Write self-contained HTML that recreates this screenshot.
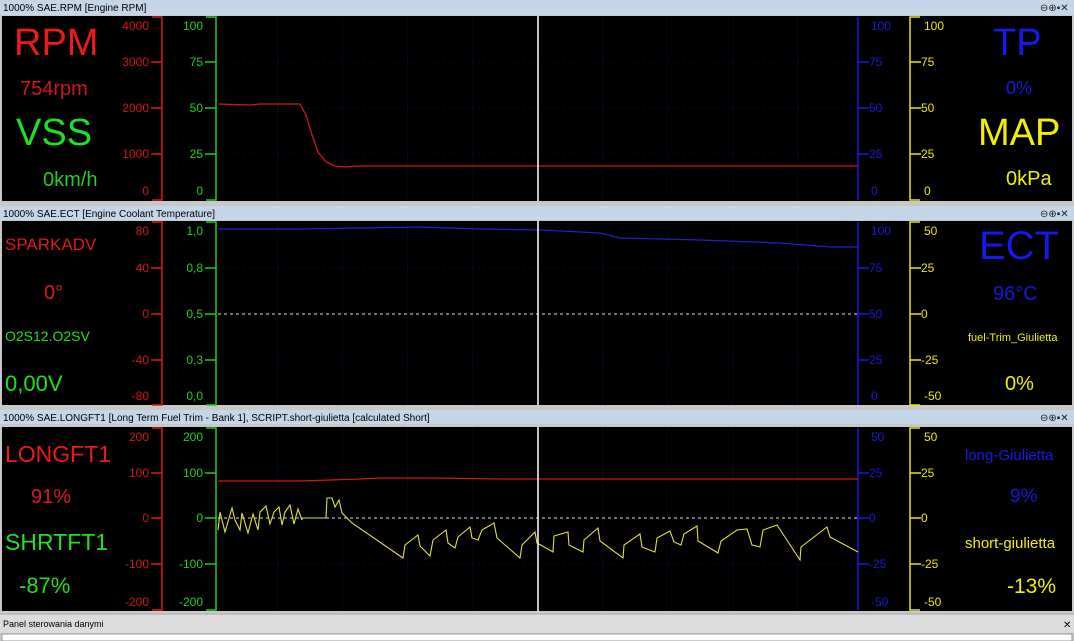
<!DOCTYPE html>
<html><head><meta charset="utf-8"><style>
html,body{margin:0;padding:0;background:#d4d0c8;width:1074px;height:641px;overflow:hidden}
svg{display:block}
text{font-family:"Liberation Sans",Arial,sans-serif}
.t{font-size:10px;fill:#000}
</style></head><body>
<svg width="1074" height="641" viewBox="0 0 1074 641" xmlns="http://www.w3.org/2000/svg">
<defs>
<pattern id="vg" x="0" y="0" width="65" height="10" patternUnits="userSpaceOnUse">
<rect x="17" width="1" height="10" fill="#06061c"/>
</pattern>
</defs>
<rect width="1074" height="641" fill="#c8c8c8"/>
<g>
<rect x="0" y="0" width="1074" height="15" fill="#c5d6e8"/>
<text class="t" x="3" y="11">1000% SAE.RPM [Engine RPM]</text>
<rect x="0" y="206" width="1074" height="14" fill="#c5d6e8"/>
<text class="t" x="3" y="217">1000% SAE.ECT [Engine Coolant Temperature]</text>
<rect x="0" y="410" width="1074" height="14" fill="#c5d6e8"/>
<text class="t" x="3" y="421">1000% SAE.LONGFT1 [Long Term Fuel Trim - Bank 1], SCRIPT.short-giulietta [calculated Short]</text>
<text x="1040" y="11" font-size="10" fill="#222">⊖⊕▪✕</text>
<text x="1040" y="217" font-size="10" fill="#222">⊖⊕▪✕</text>
<text x="1040" y="421" font-size="10" fill="#222">⊖⊕▪✕</text>
</g>
<rect x="2" y="16" width="1070" height="185" fill="#000"/>
<rect x="2" y="221" width="1070" height="184" fill="#000"/>
<rect x="2" y="427" width="1070" height="184" fill="#000"/>
<rect x="218" y="16" width="640" height="185" fill="url(#vg)"/>
<rect x="218" y="221" width="640" height="184" fill="url(#vg)"/>
<rect x="218" y="427" width="640" height="184" fill="url(#vg)"/>
<g stroke="#0a0a30" stroke-dasharray="2,3" stroke-width="1">
<line x1="218" y1="62" x2="858" y2="62"/><line x1="218" y1="108" x2="858" y2="108"/><line x1="218" y1="154" x2="858" y2="154"/>
<line x1="218" y1="268" x2="858" y2="268"/><line x1="218" y1="360" x2="858" y2="360"/>
<line x1="218" y1="472" x2="858" y2="472"/><line x1="218" y1="564" x2="858" y2="564"/>
</g>
<g stroke="#ddd" stroke-dasharray="3,3"><line x1="218" y1="314" x2="858" y2="314"/><line x1="218" y1="518" x2="858" y2="518"/></g>

<g fill="none" stroke-width="1.5">
<path d="M152,17H162V200H152" stroke="#e01818"/>
<path d="M206,17H216V200H206" stroke="#20d020"/>
<path d="M858,17V200" stroke="#1818e0"/>
<path d="M920,17H910V200H920" stroke="#e8e800"/>
<path d="M151,62h11M151,108h11M151,154h11" stroke="#e01818"/>
<path d="M205,62h11M205,108h11M205,154h11" stroke="#20d020"/>
<path d="M858,62h11M858,108h11M858,154h11" stroke="#1818e0"/>
<path d="M910,62h11M910,108h11M910,154h11" stroke="#e8e800"/>
</g>
<g fill="none" stroke-width="1.5">
<path d="M152,222H162V405H152" stroke="#e01818"/>
<path d="M206,222H216V405H206" stroke="#20d020"/>
<path d="M858,222V405" stroke="#1818e0"/>
<path d="M920,222H910V405H920" stroke="#e8e800"/>
<path d="M151,268h11M151,314h11M151,360h11" stroke="#e01818"/>
<path d="M205,268h11M205,314h11M205,360h11" stroke="#20d020"/>
<path d="M858,268h11M858,314h11M858,360h11" stroke="#1818e0"/>
<path d="M910,268h11M910,314h11M910,360h11" stroke="#e8e800"/>
</g>
<g fill="none" stroke-width="1.5">
<path d="M152,428H162V610H152" stroke="#e01818"/>
<path d="M206,428H216V610H206" stroke="#20d020"/>
<path d="M858,428V610" stroke="#1818e0"/>
<path d="M920,428H910V610H920" stroke="#e8e800"/>
<path d="M151,473h11M151,518h11M151,564h11" stroke="#e01818"/>
<path d="M205,473h11M205,518h11M205,564h11" stroke="#20d020"/>
<path d="M858,473h11M858,518h11M858,564h11" stroke="#1818e0"/>
<path d="M910,473h11M910,518h11M910,564h11" stroke="#e8e800"/>
</g>

<g font-size="12" text-anchor="end" fill="#d01818">
<text x="149" y="30">4000</text><text x="149" y="66">3000</text><text x="149" y="112">2000</text><text x="149" y="158">1000</text><text x="149" y="195">0</text>
<text x="149" y="235">80</text><text x="149" y="272">40</text><text x="149" y="318">0</text><text x="149" y="364">-40</text><text x="149" y="400">-80</text>
<text x="149" y="441">200</text><text x="149" y="477">100</text><text x="149" y="522">0</text><text x="149" y="568">-100</text><text x="149" y="606">-200</text>
</g>
<g font-size="12" text-anchor="end" fill="#20d020">
<text x="203" y="30">100</text><text x="203" y="66">75</text><text x="203" y="112">50</text><text x="203" y="158">25</text><text x="203" y="195">0</text>
<text x="203" y="235">1,0</text><text x="203" y="272">0,8</text><text x="203" y="318">0,5</text><text x="203" y="364">0,3</text><text x="203" y="400">0,0</text>
<text x="203" y="441">200</text><text x="203" y="477">100</text><text x="203" y="522">0</text><text x="203" y="568">-100</text><text x="203" y="606">-200</text>
</g>
<g font-size="12" fill="#1a1ad0">
<text x="871" y="30">100</text><text x="869" y="66">75</text><text x="869" y="112">50</text><text x="869" y="158">25</text><text x="871" y="195">0</text>
<text x="871" y="235">100</text><text x="869" y="272">75</text><text x="869" y="318">50</text><text x="869" y="364">25</text><text x="871" y="400">0</text>
<text x="871" y="441">50</text><text x="869" y="477">25</text><text x="869" y="522">0</text><text x="869" y="568">-25</text><text x="871" y="606">-50</text>
</g>
<g font-size="12" fill="#e8e800">
<text x="924" y="30">100</text><text x="921" y="66">75</text><text x="921" y="112">50</text><text x="921" y="158">25</text><text x="924" y="195">0</text>
<text x="924" y="235">50</text><text x="921" y="272">25</text><text x="921" y="318">0</text><text x="921" y="364">-25</text><text x="924" y="400">-50</text>
<text x="924" y="441">50</text><text x="921" y="477">25</text><text x="921" y="522">0</text><text x="921" y="568">-25</text><text x="924" y="606">-50</text>
</g>

<path d="M218,104L250,105L260,104L300,104L306,115L312,135L318,152L326,162L335,166L345,167L360,166L858,166" fill="none" stroke="#d01818" stroke-width="1.3"/>
<path d="M218,229L300,229L420,227L480,229L540,230L600,233L620,238L700,240L780,243L830,247L858,247" fill="none" stroke="#2020d0" stroke-width="1.3"/>
<path d="M218,481L300,481L330,480L360,479L380,478L430,478L500,479L560,479L858,479" fill="none" stroke="#d01818" stroke-width="1.3"/>
<path d="M218,530L220,512L225,532L232,508L235,520L240,530L242,513L248,533L253,514L258,530L260,512L266,506L270,524L274,512L279,507L282,525L285,512L290,505L294,524L298,509L302,520L302,518L326,518L327,498L332,498L335,507L339,500L342,513L352,523L403,558L405,545L418,535L420,546L430,556L433,540L446,530L448,543L455,548L458,537L470,527L472,538L478,540L482,530L494,523L497,538L520,558L522,545L535,532L537,543L553,552L554,536L568,532L569,545L583,552L584,540L598,528L600,541L623,558L624,545L640,534L642,547L655,552L657,538L670,531L674,542L681,545L684,534L697,526L698,541L718,553L721,541L737,530L747,529L752,545L760,547L763,530L777,525L800,560L801,547L827,527L830,537L858,552" fill="none" stroke="#e0e040" stroke-width="1.1"/>

<g stroke="#ffffff" stroke-width="1.5"><line x1="538" y1="16" x2="538" y2="201"/><line x1="538" y1="221" x2="538" y2="405"/><line x1="538" y1="427" x2="538" y2="611"/></g>

<g>
<text x="14" y="55" font-size="38" fill="#f01818">RPM</text>
<text x="20" y="95" font-size="20" fill="#d01818">754rpm</text>
<text x="16" y="145" font-size="38" fill="#20e020">VSS</text>
<text x="43" y="186" font-size="20" fill="#20d020">0km/h</text>
<text x="993" y="55" font-size="38" fill="#1818e8">TP</text>
<text x="1006" y="94" font-size="18" fill="#1818d8">0%</text>
<text x="978" y="145" font-size="38" fill="#f0f000">MAP</text>
<text x="1006" y="185" font-size="20" fill="#f0f000">0kPa</text>

<text x="5" y="250" font-size="17" fill="#e01818">SPARKADV</text>
<text x="44" y="299" font-size="20" fill="#e01818">0°</text>
<text x="5" y="341" font-size="14" fill="#20e020">O2S12.O2SV</text>
<text x="5" y="391" font-size="22" fill="#20e020">0,00V</text>
<text x="979" y="259" font-size="40" fill="#1818e8">ECT</text>
<text x="993" y="300" font-size="20" fill="#1818d8">96°C</text>
<text x="968" y="341" font-size="11" fill="#f0f000">fuel-Trim_Giulietta</text>
<text x="1005" y="390" font-size="20" fill="#f0f000">0%</text>

<text x="5" y="462" font-size="23" fill="#f01818">LONGFT1</text>
<text x="31" y="503" font-size="20" fill="#e01818">91%</text>
<text x="5" y="550" font-size="23" fill="#20e020">SHRTFT1</text>
<text x="19" y="593" font-size="22" fill="#20e020">-87%</text>
<text x="965" y="460" font-size="15" fill="#1818e8">long-Giulietta</text>
<text x="1010" y="502" font-size="19" fill="#1818d8">9%</text>
<text x="965" y="548" font-size="15" fill="#f0f000">short-giulietta</text>
<text x="1007" y="593" font-size="21" fill="#f0f000">-13%</text>
</g>

<rect x="0" y="614" width="1074" height="19" fill="#dcdcdc"/>
<line x1="0" y1="614" x2="1074" y2="614" stroke="#aaa"/>
<text x="3" y="627" font-size="9" fill="#000">Panel sterowania danymi</text>
<text x="1063" y="628" font-size="10" fill="#000">✕</text>
<rect x="2" y="634" width="1070" height="7" fill="#fff" stroke="#999"/>
</svg>
</body></html>
